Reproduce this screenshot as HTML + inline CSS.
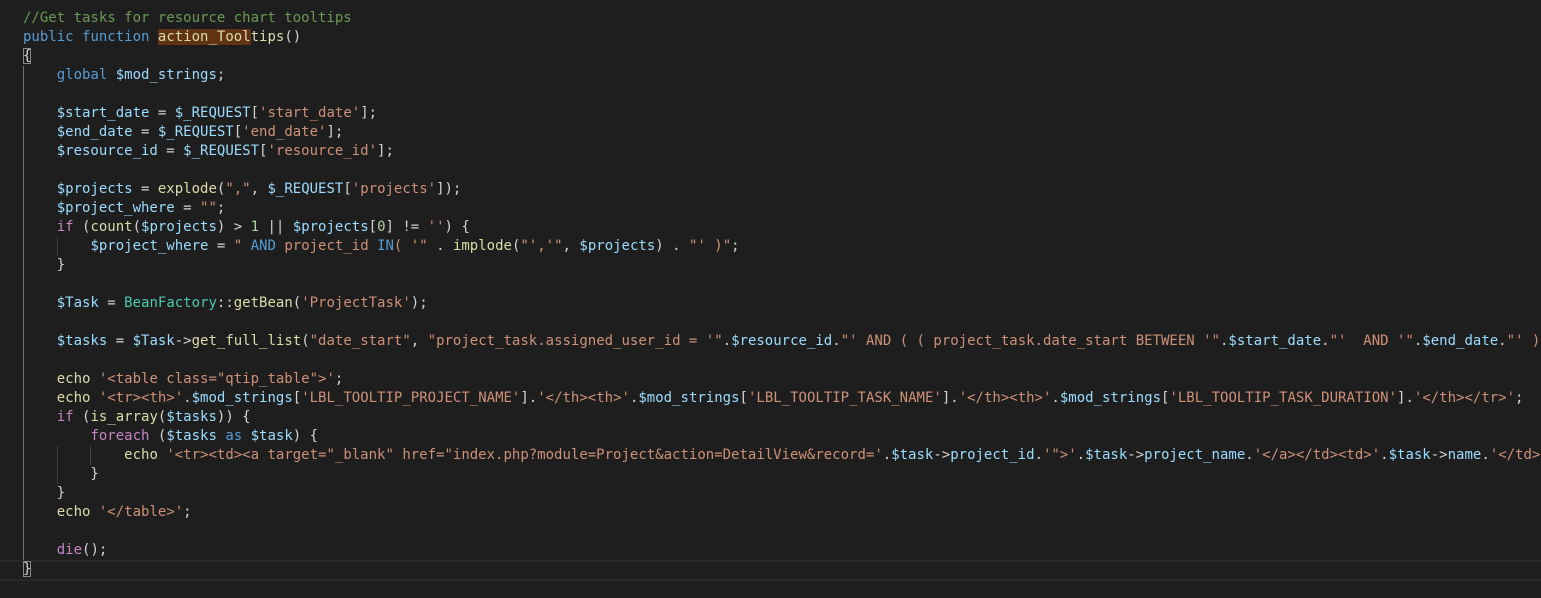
<!DOCTYPE html>
<html><head><meta charset="utf-8"><style>
html,body{margin:0;padding:0;background:#1e1e1e;width:1541px;height:598px;overflow:hidden}
#ed{position:absolute;left:0;top:9px;width:1541px;font-family:"DejaVu Sans Mono","Liberation Mono",monospace;font-size:14px;color:#d4d4d4}
.l{height:19px;line-height:19px;white-space:pre;padding-left:23px;position:relative;overflow:hidden}
.c{color:#6a9955}.k{color:#569cd6}.f{color:#dcdcaa}.v{color:#9cdcfe}.s{color:#ce9178}.p{color:#c586c0}.t{color:#4ec9b0}.n{color:#b5cea8}
.hl{background:#613214}
.bm{outline:1px solid #888;outline-offset:-1px}
.cur{position:absolute;left:0;top:551px;width:1541px;height:17px;border-top:2px solid #282828;border-bottom:2px solid #282828}
.g{position:absolute;width:1px;background:#404040}
</style></head><body>
<div id="ed">
<div class="cur"></div>
<div class="g" style="left:23px;top:57px;height:494px;background:#707070"></div>
<div class="g" style="left:57px;top:228px;height:19px"></div>
<div class="g" style="left:57px;top:437px;height:38px"></div>
<div class="g" style="left:90px;top:437px;height:19px"></div>
<div class="l"><span class="c">//Get tasks for resource chart tooltips</span></div>
<div class="l"><span class="k">public</span> <span class="k">function</span> <span class="f"><span class="hl">action_Tool</span>tips</span>()</div>
<div class="l"><span class="bm">{</span></div>
<div class="l">    <span class="k">global</span> <span class="v">$mod_strings</span>;</div>
<div class="l"> </div>
<div class="l">    <span class="v">$start_date</span> = <span class="v">$_REQUEST</span>[<span class="s">'start_date'</span>];</div>
<div class="l">    <span class="v">$end_date</span> = <span class="v">$_REQUEST</span>[<span class="s">'end_date'</span>];</div>
<div class="l">    <span class="v">$resource_id</span> = <span class="v">$_REQUEST</span>[<span class="s">'resource_id'</span>];</div>
<div class="l"> </div>
<div class="l">    <span class="v">$projects</span> = <span class="f">explode</span>(<span class="s">","</span>, <span class="v">$_REQUEST</span>[<span class="s">'projects'</span>]);</div>
<div class="l">    <span class="v">$project_where</span> = <span class="s">""</span>;</div>
<div class="l">    <span class="p">if</span> (<span class="f">count</span>(<span class="v">$projects</span>) &gt; <span class="n">1</span> || <span class="v">$projects</span>[<span class="n">0</span>] != <span class="s">''</span>) {</div>
<div class="l">        <span class="v">$project_where</span> = <span class="s">" </span><span class="k">AND</span><span class="s"> project_id </span><span class="k">IN</span><span class="s">( '"</span> . <span class="f">implode</span>(<span class="s">"','"</span>, <span class="v">$projects</span>) . <span class="s">"' )"</span>;</div>
<div class="l">    }</div>
<div class="l"> </div>
<div class="l">    <span class="v">$Task</span> = <span class="t">BeanFactory</span>::<span class="f">getBean</span>(<span class="s">'ProjectTask'</span>);</div>
<div class="l"> </div>
<div class="l">    <span class="v">$tasks</span> = <span class="v">$Task</span>-&gt;<span class="f">get_full_list</span>(<span class="s">"date_start"</span>, <span class="s">"project_task.assigned_user_id = '"</span>.<span class="v">$resource_id</span>.<span class="s">"' AND ( ( project_task.date_start BETWEEN '"</span>.<span class="v">$start_date</span>.<span class="s">"'  AND '"</span>.<span class="v">$end_date</span>.<span class="s">"' ) OR ( project_task.date_finish BETWEEN '"</span></div>
<div class="l"> </div>
<div class="l">    <span class="f">echo</span> <span class="s">'&lt;table class="qtip_table"&gt;'</span>;</div>
<div class="l">    <span class="f">echo</span> <span class="s">'&lt;tr&gt;&lt;th&gt;'</span>.<span class="v">$mod_strings</span>[<span class="s">'LBL_TOOLTIP_PROJECT_NAME'</span>].<span class="s">'&lt;/th&gt;&lt;th&gt;'</span>.<span class="v">$mod_strings</span>[<span class="s">'LBL_TOOLTIP_TASK_NAME'</span>].<span class="s">'&lt;/th&gt;&lt;th&gt;'</span>.<span class="v">$mod_strings</span>[<span class="s">'LBL_TOOLTIP_TASK_DURATION'</span>].<span class="s">'&lt;/th&gt;&lt;/tr&gt;'</span>;</div>
<div class="l">    <span class="p">if</span> (<span class="f">is_array</span>(<span class="v">$tasks</span>)) {</div>
<div class="l">        <span class="p">foreach</span> (<span class="v">$tasks</span> <span class="k">as</span> <span class="v">$task</span>) {</div>
<div class="l">            <span class="f">echo</span> <span class="s">'&lt;tr&gt;&lt;td&gt;&lt;a target="_blank" href="index.php?module=Project&amp;action=DetailView&amp;record='</span>.<span class="v">$task</span>-&gt;<span class="v">project_id</span>.<span class="s">'"&gt;'</span>.<span class="v">$task</span>-&gt;<span class="v">project_name</span>.<span class="s">'&lt;/a&gt;&lt;/td&gt;&lt;td&gt;'</span>.<span class="v">$task</span>-&gt;<span class="v">name</span>.<span class="s">'&lt;/td&gt;&lt;td&gt;'</span></div>
<div class="l">        }</div>
<div class="l">    }</div>
<div class="l">    <span class="f">echo</span> <span class="s">'&lt;/table&gt;'</span>;</div>
<div class="l"> </div>
<div class="l">    <span class="p">die</span>();</div>
<div class="l"><span class="bm">}</span></div>
</div>
</body></html>
